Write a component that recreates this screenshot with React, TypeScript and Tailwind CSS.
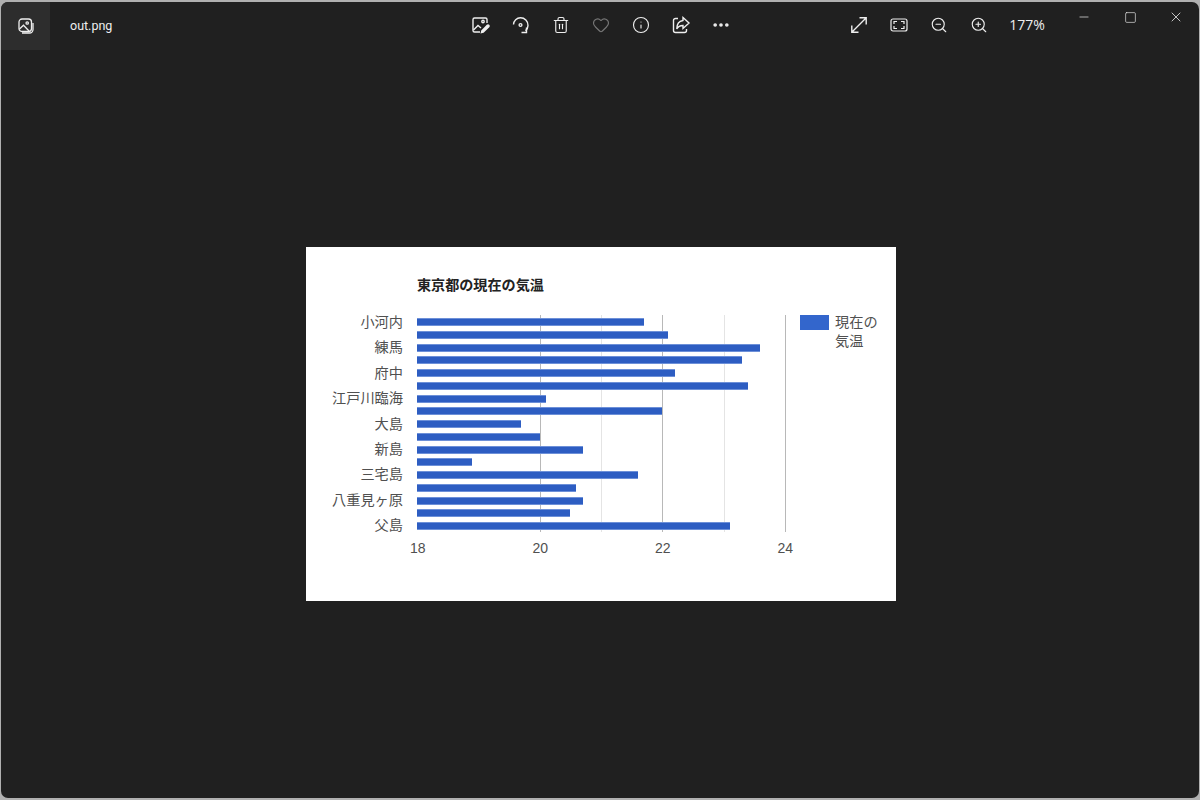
import React from "react";
import { Trash2, Heart, Info, MoreHorizontal, ZoomIn, ZoomOut, Minus, Square, X } from "lucide-react";

const temps = [21.7, 22.1, 23.6, 23.3, 22.2, 23.4, 20.1, 22, 19.7, 20, 20.7, 18.9, 21.6, 20.6, 20.7, 20.5, 23.1];
const labels = ["小河内", "練馬", "府中", "江戸川臨海", "大島", "新島", "三宅島", "八重見ヶ原", "父島"];
const ticks = ["18", "20", "22", "24"];

const EditImageIcon = () => (
  <svg width="20" height="20" viewBox="0 0 20 20" fill="none" stroke="currentColor" strokeWidth="1.4">
    <path d="M9 3H3.500A1.500 1.500 0 0 0 2 4.500V15.500A1.500 1.500 0 0 0 3.500 17H9" />
    <path d="M9 3H14.500A1.500 1.500 0 0 1 16 4.500V8" />
    <circle cx="12" cy="6.500" r="1.200" />
    <path d="M2.500 15L7 10.500L10 13" />
    <path d="M9.500 18.500L10.200 15.500L15.800 9.800A1.600 1.600 0 0 1 18.300 12.200L12.600 17.800Z" fill="currentColor" stroke="none" />
  </svg>
);

const RotateIcon = () => (
  <svg width="20" height="20" viewBox="0 0 20 20" fill="none" stroke="currentColor" strokeWidth="1.4">
    <path d="M2.500 9.500A7 7 0 0 1 9.500 2.800A7.500 7.500 0 0 1 17 10.500A7 7 0 0 1 14.500 15.800" />
    <circle cx="9.500" cy="10" r="1.400" />
    <path d="M15.500 12.500V17.500H10.500" />
  </svg>
);

const ShareIcon = () => (
  <svg width="20" height="20" viewBox="0 0 20 20" fill="none" stroke="currentColor" strokeWidth="1.4">
    <path d="M7 3.500H4.500A2 2 0 0 0 2.500 5.500V15.500A2 2 0 0 0 4.500 17.500H13.500A2 2 0 0 0 15.500 15.500V14" />
    <path d="M12 2.500L18 8L12 13.500V10.500C9 10.500 7 11.500 5.800 14C5.800 9.500 8 6 12 5.500Z" />
  </svg>
);

const ExpandIcon = () => (
  <svg width="20" height="20" viewBox="0 0 20 20" fill="none" stroke="currentColor" strokeWidth="1.4">
    <path d="M3 17L17 3M10.500 2.800H17.200V9.500M2.800 10.500V17.200H9.500" />
  </svg>
);

const FitIcon = () => (
  <svg width="20" height="20" viewBox="0 0 20 20" fill="none" stroke="currentColor" strokeWidth="1.2">
    <rect x="2" y="4" width="16" height="12" rx="2" />
    <path d="M8 6.500H5V9M12 6.500H15V9M8 13.500H5V11M12 13.500H15V11" />
  </svg>
);

const PhotosIcon = () => (
  <svg width="18" height="18" viewBox="0 0 18 18" fill="none" stroke="currentColor" strokeWidth="1.300">
    <rect x="2" y="2" width="12.500" height="12.500" rx="3" />
    <circle cx="10.200" cy="6" r="1.200" />
    <path d="M2.500 12L6.500 8.200L12 14" />
    <path d="M16 6V12.500A3.500 3.500 0 0 1 12.500 16H5" />
  </svg>
);

const ToolButton = ({ children, className = "text-[#eeeeee]" }: { children: React.ReactNode; className?: string }) => (
  <div className={`w-10 h-[50px] shrink-0 flex items-center justify-center ${className}`}>{children}</div>
);

const App = () => {
  return (
    <div className="w-[1200px] h-[800px] bg-[#b0b0b0] overflow-hidden px-px py-[2px] font-['Inter',sans-serif]">
      <div className="w-full h-full bg-[#202020] rounded-[7px] flex flex-col">
        {/* Title bar */}
        <div className="h-[48px] flex items-start text-[#eeeeee]">
          <div className="w-[49px] h-[48px] shrink-0 bg-[#2d2d2d] flex items-center justify-center rounded-tl-[7px]">
            <PhotosIcon />
          </div>
          <div className="w-[411px] h-[48px] shrink-0 pl-5 flex items-center text-[12.5px] font-['Roboto',sans-serif]">out.png</div>
          <div className="flex shrink-0 -mt-[2px]">
            <ToolButton><EditImageIcon /></ToolButton>
            <ToolButton><RotateIcon /></ToolButton>
            <ToolButton><Trash2 size={18} strokeWidth={1.5} /></ToolButton>
            <ToolButton className="text-[#777777]"><Heart size={18} strokeWidth={1.5} /></ToolButton>
            <ToolButton><Info size={18} strokeWidth={1.5} /></ToolButton>
            <ToolButton><ShareIcon /></ToolButton>
            <ToolButton><MoreHorizontal size={20} strokeWidth={2.4} /></ToolButton>
          </div>
          <div className="flex shrink-0 ml-[98px] -mt-[2px]">
            <ToolButton><ExpandIcon /></ToolButton>
            <ToolButton><FitIcon /></ToolButton>
            <ToolButton><ZoomOut size={18} strokeWidth={1.5} /></ToolButton>
            <ToolButton><ZoomIn size={18} strokeWidth={1.5} /></ToolButton>
          </div>
          <div className="w-[54px] h-[46px] shrink-0 ml-[1px] flex items-center justify-center text-sm font-['Open_Sans',sans-serif]">177%</div>
          <div className="flex shrink-0 ml-[7px] -mt-[1px]">
            <div className="w-[46px] h-8 flex items-center justify-center"><Minus size={14} strokeWidth={1.2} /></div>
            <div className="w-[46px] h-8 flex items-center justify-center"><Square size={13} strokeWidth={1.2} /></div>
            <div className="w-[46px] h-8 flex items-center justify-center"><X size={16} strokeWidth={1.2} /></div>
          </div>
        </div>

        {/* Picture */}
        <div className="flex-1 pl-[305px] pt-[197px]">
          <div className="w-[590px] h-[354px] bg-white pt-[29px] pl-[26px]">
            <div className="pl-[85px] h-[39px] text-[14.1px] leading-[16px] font-bold text-[#222222] font-['Noto_Sans_CJK_JP',sans-serif]">
              東京都の現在の気温
            </div>
            <div className="flex items-start">
              <div className="w-[71px] h-[217px] -mt-[1px] flex flex-col items-end justify-between text-[14.2px] leading-[14px] text-[#505050] font-['Noto_Sans_CJK_JP',sans-serif] whitespace-nowrap">
                {labels.map((label) => (
                  <div key={label}>{label}</div>
                ))}
              </div>
              <div className="ml-[14px] w-[369px]">
                <div className="relative h-[217px]">
                  <div className="absolute inset-y-0 left-[123px] w-px bg-[#b8b8b8]" />
                  <div className="absolute inset-y-0 left-[184px] w-px bg-[#e4e4e4]" />
                  <div className="absolute inset-y-0 left-[245px] w-px bg-[#b8b8b8]" />
                  <div className="absolute inset-y-0 left-[307px] w-px bg-[#e4e4e4]" />
                  <div className="absolute inset-y-0 left-[368px] w-px bg-[#b8b8b8]" />
                  <div className="relative h-full flex flex-col justify-between pt-[3px] pb-[2px]">
                    {temps.map((t, i) => (
                      <div
                        key={i}
                        className="h-[8px] bg-[#2d5dc2] border-y border-[#6d90d8]"
                        style={{ width: `${(t - 18) * 61.33}px` }}
                      />
                    ))}
                  </div>
                </div>
                <div className="flex justify-between mt-[8px] text-[14px] leading-[16px] text-[#505050] -mx-[7px] w-[383px] font-['Liberation_Sans',sans-serif]">
                  {ticks.map((t) => (
                    <span key={t}>{t}</span>
                  ))}
                </div>
              </div>
              <div className="ml-[14px] flex items-start gap-[6px]">
                <div className="w-[29px] h-[15px] bg-[#3366cc] shrink-0" />
                <div className="w-[44px] text-[14.2px] leading-[19px] text-[#505050] font-['Noto_Sans_CJK_JP',sans-serif] -mt-[3px]">現在の気温</div>
              </div>
            </div>
          </div>
        </div>
      </div>
    </div>
  );
};

export default App;
